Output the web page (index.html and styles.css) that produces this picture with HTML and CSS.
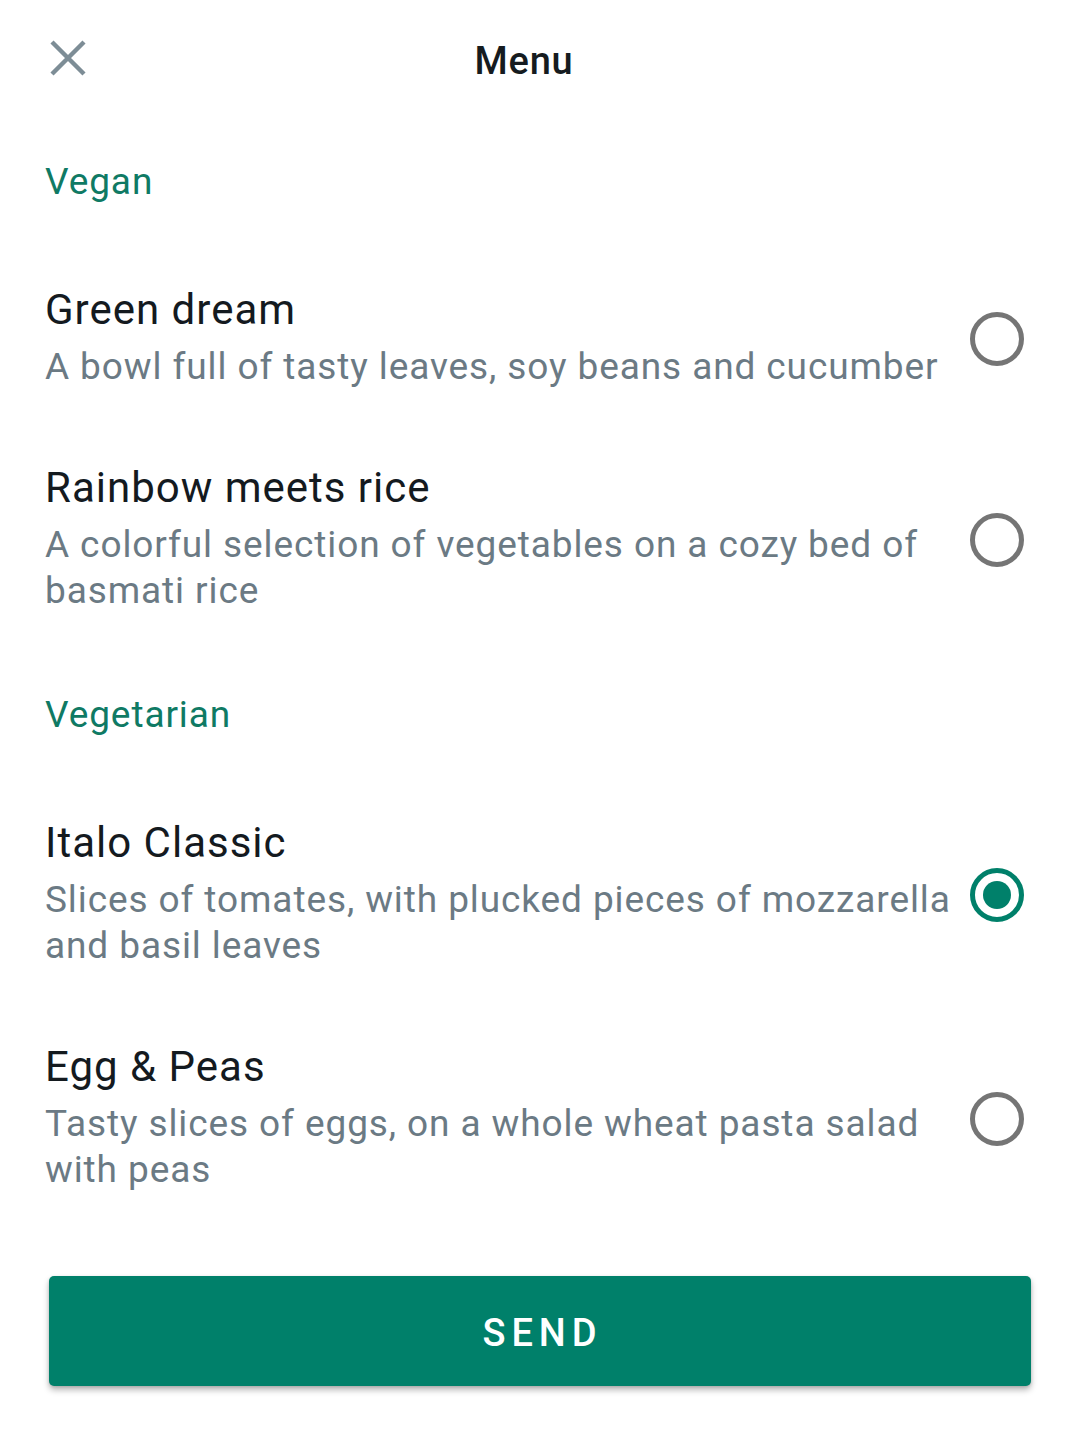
FILE: index.html
```html
<!DOCTYPE html>
<html lang="en">
<head>
<meta charset="utf-8">
<title>Menu</title>
<link rel="stylesheet" href="styles.css">
</head>
<body>
<div class="screen">
  <header class="topbar">
    <button class="close" aria-label="Close">
      <svg width="36" height="36" viewBox="0 0 36 36"><path d="M2 2 L34 34 M34 2 L2 34" stroke="#7d8d96" stroke-width="4.4" stroke-linecap="butt" fill="none"/></svg>
    </button>
    <h1 class="title">Menu</h1>
  </header>

  <main class="list">
    <h2 class="section">Vegan</h2>
    <div class="item">
      <div class="text">
        <div class="name">Green dream</div>
        <div class="desc">A bowl full of tasty leaves, soy beans and cucumber</div>
      </div>
      <span class="radio"></span>
    </div>
    <div class="item">
      <div class="text">
        <div class="name">Rainbow meets rice</div>
        <div class="desc">A colorful selection of vegetables on a cozy bed of basmati rice</div>
      </div>
      <span class="radio"></span>
    </div>

    <h2 class="section">Vegetarian</h2>
    <div class="item">
      <div class="text">
        <div class="name">Italo Classic</div>
        <div class="desc">Slices of tomates, with plucked pieces of mozzarella and basil leaves</div>
      </div>
      <span class="radio checked"></span>
    </div>
    <div class="item">
      <div class="text">
        <div class="name">Egg &amp; Peas</div>
        <div class="desc">Tasty slices of eggs, on a whole wheat pasta salad with peas</div>
      </div>
      <span class="radio"></span>
    </div>
  </main>

  <div class="actions">
    <button class="send">SEND</button>
  </div>
</div>
</body>
</html>
```

FILE: styles.css
```css
* { box-sizing: border-box; }
html, body {
  margin: 0;
  padding: 0;
  background: #ffffff;
}
body {
  font-family: Roboto, "Noto Sans", sans-serif;
  width: 1080px;
  height: 1434px;
  overflow: hidden;
}
.screen {
  display: flex;
  flex-direction: column;
}
.topbar {
  position: relative;
  height: 117px;
  display: flex;
  align-items: center;
  justify-content: center;
}
.close {
  position: absolute;
  left: 50px;
  top: 40px;
  width: 36px;
  height: 36px;
  padding: 0;
  border: 0;
  background: none;
  display: flex;
}
.title {
  margin: 0;
  font-size: 38px;
  font-weight: 500;
  letter-spacing: 0.75px;
  color: #151b20;
  line-height: 44px;
  padding-top: 4px;
  padding-right: 32px;
}
.list {
  display: flex;
  flex-direction: column;
  padding: 0 56px 0 45px;
}
.section {
  margin: 0;
  padding: 43px 0 44px;
  font-size: 37px;
  line-height: 44px;
  font-weight: 400;
  letter-spacing: 0.9px;
  color: #0f7a64;
}
.item {
  display: flex;
  align-items: center;
  gap: 14px;
  padding: 36px 0;
}
.text {
  flex: 1;
  min-width: 0;
}
.name {
  font-size: 42px;
  line-height: 52px;
  letter-spacing: 1px;
  color: #141a1f;
}
.desc {
  margin-top: 8px;
  font-size: 37px;
  line-height: 46px;
  letter-spacing: 0.9px;
  color: #6b7a84;
}
.radio {
  flex: none;
  width: 54px;
  height: 54px;
  margin-top: 3px;
  border-radius: 50%;
  border: 5.5px solid #757575;
  display: flex;
  align-items: center;
  justify-content: center;
}
.radio.checked {
  border-color: #00806a;
}
.radio.checked::after {
  content: "";
  width: 28px;
  height: 28px;
  border-radius: 50%;
  background: #00806a;
}
.actions {
  padding: 47px 49px 0;
}
.send {
  width: 100%;
  height: 110px;
  border: 0;
  border-radius: 5px;
  background: #00806a;
  color: #ffffff;
  font-family: Roboto, "Noto Sans", sans-serif;
  font-size: 38px;
  font-weight: 500;
  letter-spacing: 6px;
  padding-left: 11px;
  padding-top: 4px;
  box-shadow: 0 4px 6px rgba(0, 0, 0, 0.28), 0 1px 3px rgba(0, 0, 0, 0.12);
}
```
